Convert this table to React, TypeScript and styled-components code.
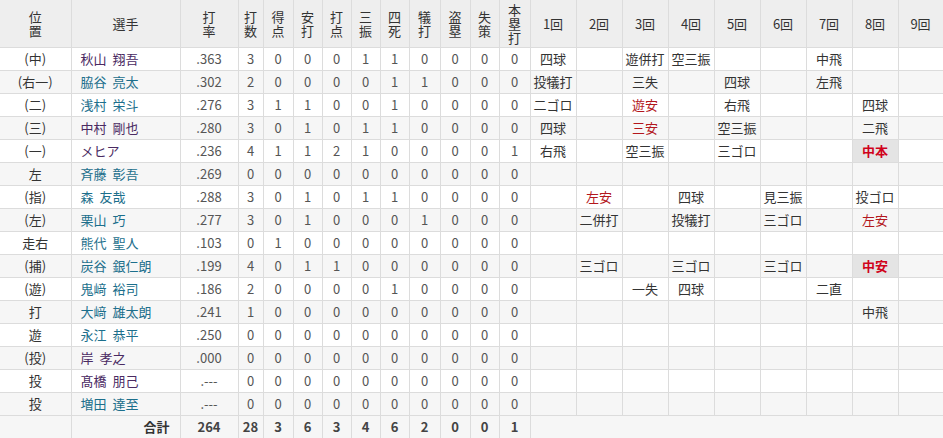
import React from 'react';
import styled, { createGlobalStyle } from 'styled-components';

const GlobalStyle = createGlobalStyle`
  html, body {
    margin: 0;
    padding: 0;
    background: #fff;
  }
  body {
    font-family: "Noto Sans CJK JP", "Liberation Sans", sans-serif;
    color: #333;
  }
`;

const Table = styled.table`
  width: 943px;
  border-collapse: collapse;
  table-layout: fixed;
  font-size: 13px;
`;

const Th = styled.th<{ $first?: boolean }>`
  background: #eeeeee;
  border: 1px solid #dcdcdc;
  border-top: none;
  ${(p) => (p.$first ? 'border-left: none;' : '')}
  font-weight: normal;
  font-size: 13px;
  line-height: 14px;
  height: 47px;
  padding: 0;
  text-align: center;
  vertical-align: middle;
  color: #333;
`;

const Row = styled.tr<{ $shade: boolean }>`
  background: ${(p) => (p.$shade ? '#f6f6f6' : '#fff')};
`;

const Td = styled.td`
  border: 1px solid #dcdcdc;
  height: 22px;
  padding: 0;
  text-align: center;
  vertical-align: middle;
  white-space: nowrap;
  overflow: hidden;
  line-height: 16px;
`;

const PosCell = styled(Td)`
  border-left: none;
  font-size: 13px;
`;

const NameCell = styled(Td)<{ $visited: boolean }>`
  text-align: left;
  padding-left: 9px;
  font-size: 13px;
  word-spacing: 3px;
  color: ${(p) => (p.$visited ? '#4a2a62' : '#1c6f8c')};
`;

const NumCell = styled(Td)`
  font-size: 13px;
  color: #555;
`;

const PlayCell = styled(Td)<{ $kind: 'out' | 'hit' | 'score' }>`
  font-size: 13px;
  color: ${(p) => (p.$kind === 'out' ? '#333' : p.$kind === 'hit' ? '#b3171d' : '#d0021b')};
  font-weight: ${(p) => (p.$kind === 'score' ? 'bold' : 'normal')};
  background: ${(p) => (p.$kind === 'score' ? '#e4e4e4' : 'transparent')};
`;

const TotalRow = styled.tr`
  background: #f6f6f6;
`;

const TotalLabel = styled(Td)`
  text-align: right;
  padding-right: 10px;
  font-weight: bold;
  font-size: 13px;
`;

const TotalNum = styled(Td)`
  font-weight: bold;
  font-size: 13px;
  color: #444;
`;

const EmptyTail = styled(Td)`
  border-right: none;
`;

const widths = [71, 109, 58, 25, 30, 29, 29, 29, 29, 31, 30, 29, 31, 46, 46, 46, 46, 46, 46, 46, 46, 45];

const statHeads = [
  ['打', '率'],
  ['打', '数'],
  ['得', '点'],
  ['安', '打'],
  ['打', '点'],
  ['三', '振'],
  ['四', '死'],
  ['犠', '打'],
  ['盗', '塁'],
  ['失', '策'],
  ['本', '塁', '打'],
];

type Player = {
  pos: string;
  name: string;
  visited: boolean;
  avg: string;
  stats: number[];
  plays: Record<number, string>;
};

// '+' = hit (red), '*' = RBI hit (highlighted)
const players: Player[] = [
  { pos: '(中)', name: '秋山 翔吾', visited: true, avg: '.363', stats: [3, 0, 0, 0, 1, 1, 0, 0, 0, 0], plays: { 1: '四球', 3: '遊併打', 4: '空三振', 7: '中飛' } },
  { pos: '(右一)', name: '脇谷 亮太', visited: false, avg: '.302', stats: [2, 0, 0, 0, 0, 1, 1, 0, 0, 0], plays: { 1: '投犠打', 3: '三失', 5: '四球', 7: '左飛' } },
  { pos: '(二)', name: '浅村 栄斗', visited: false, avg: '.276', stats: [3, 1, 1, 0, 0, 1, 0, 0, 0, 0], plays: { 1: '二ゴロ', 3: '+遊安', 5: '右飛', 8: '四球' } },
  { pos: '(三)', name: '中村 剛也', visited: true, avg: '.280', stats: [3, 0, 1, 0, 1, 1, 0, 0, 0, 0], plays: { 1: '四球', 3: '+三安', 5: '空三振', 8: '二飛' } },
  { pos: '(一)', name: 'メヒア', visited: true, avg: '.236', stats: [4, 1, 1, 2, 1, 0, 0, 0, 0, 1], plays: { 1: '右飛', 3: '空三振', 5: '三ゴロ', 8: '*中本' } },
  { pos: '左', name: '斉藤 彰吾', visited: false, avg: '.269', stats: [0, 0, 0, 0, 0, 0, 0, 0, 0, 0], plays: {} },
  { pos: '(指)', name: '森 友哉', visited: false, avg: '.288', stats: [3, 0, 1, 0, 1, 1, 0, 0, 0, 0], plays: { 2: '+左安', 4: '四球', 6: '見三振', 8: '投ゴロ' } },
  { pos: '(左)', name: '栗山 巧', visited: false, avg: '.277', stats: [3, 0, 1, 0, 0, 0, 1, 0, 0, 0], plays: { 2: '二併打', 4: '投犠打', 6: '三ゴロ', 8: '+左安' } },
  { pos: '走右', name: '熊代 聖人', visited: false, avg: '.103', stats: [0, 1, 0, 0, 0, 0, 0, 0, 0, 0], plays: {} },
  { pos: '(捕)', name: '炭谷 銀仁朗', visited: false, avg: '.199', stats: [4, 0, 1, 1, 0, 0, 0, 0, 0, 0], plays: { 2: '三ゴロ', 4: '三ゴロ', 6: '三ゴロ', 8: '*中安' } },
  { pos: '(遊)', name: '鬼﨑 裕司', visited: false, avg: '.186', stats: [2, 0, 0, 0, 0, 1, 0, 0, 0, 0], plays: { 3: '一失', 4: '四球', 7: '二直' } },
  { pos: '打', name: '大﨑 雄太朗', visited: false, avg: '.241', stats: [1, 0, 0, 0, 0, 0, 0, 0, 0, 0], plays: { 8: '中飛' } },
  { pos: '遊', name: '永江 恭平', visited: false, avg: '.250', stats: [0, 0, 0, 0, 0, 0, 0, 0, 0, 0], plays: {} },
  { pos: '(投)', name: '岸 孝之', visited: true, avg: '.000', stats: [0, 0, 0, 0, 0, 0, 0, 0, 0, 0], plays: {} },
  { pos: '投', name: '髙橋 朋己', visited: true, avg: '.---', stats: [0, 0, 0, 0, 0, 0, 0, 0, 0, 0], plays: {} },
  { pos: '投', name: '増田 達至', visited: false, avg: '.---', stats: [0, 0, 0, 0, 0, 0, 0, 0, 0, 0], plays: {} },
];

const totals = ['264', '28', '3', '6', '3', '4', '6', '2', '0', '0', '1'];

const innings = [1, 2, 3, 4, 5, 6, 7, 8, 9];

function Play({ text }: { text?: string }) {
  if (!text) return <PlayCell $kind="out" />;
  if (text.startsWith('*')) return <PlayCell $kind="score">{text.slice(1)}</PlayCell>;
  if (text.startsWith('+')) return <PlayCell $kind="hit">{text.slice(1)}</PlayCell>;
  return <PlayCell $kind="out">{text}</PlayCell>;
}

function Stacked({ chars }: { chars: string[] }) {
  return (
    <>
      {chars.map((c, j) => (
        <React.Fragment key={j}>
          {j > 0 && <br />}
          {c}
        </React.Fragment>
      ))}
    </>
  );
}

export default function App() {
  return (
    <>
      <GlobalStyle />
      <Table>
        <colgroup>
          {widths.map((w, i) => (
            <col key={i} style={{ width: w }} />
          ))}
        </colgroup>
        <thead>
          <tr>
            <Th $first>
              <Stacked chars={['位', '置']} />
            </Th>
            <Th>選手</Th>
            {statHeads.map((h, i) => (
              <Th key={i}>
                <Stacked chars={h} />
              </Th>
            ))}
            {innings.map((n) => (
              <Th key={n}>{n}回</Th>
            ))}
          </tr>
        </thead>
        <tbody>
          {players.map((p, i) => (
            <Row key={i} $shade={i % 2 === 1}>
              <PosCell>{p.pos}</PosCell>
              <NameCell $visited={p.visited}>{p.name}</NameCell>
              <NumCell>{p.avg}</NumCell>
              {p.stats.map((s, j) => (
                <NumCell key={j}>{s}</NumCell>
              ))}
              {innings.map((n) => (
                <Play key={n} text={p.plays[n]} />
              ))}
            </Row>
          ))}
          <TotalRow>
            <PosCell />
            <TotalLabel>合計</TotalLabel>
            {totals.map((t, i) => (
              <TotalNum key={i}>{t}</TotalNum>
            ))}
            <EmptyTail colSpan={9} />
          </TotalRow>
        </tbody>
      </Table>
    </>
  );
}
